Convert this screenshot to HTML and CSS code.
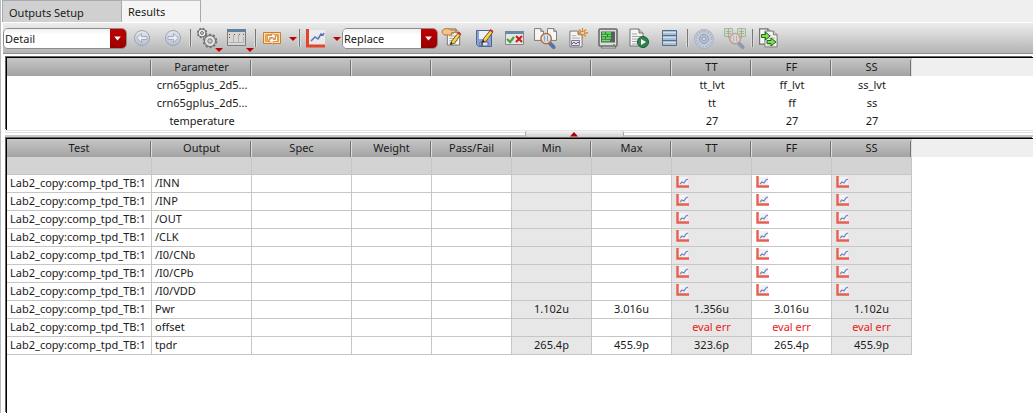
FILE: index.html
```html
<!DOCTYPE html>
<html lang="en">
<head>
<meta charset="utf-8">
<title>Results</title>
<link rel="stylesheet" href="styles.css">
</head>
<body>
<svg class="defs" aria-hidden="true">
  <defs>
    <symbol id="chart" viewBox="0 0 20 19">
      <path d="M3 1h16v15H3z" fill="#f1f3f7" opacity=".75"/>
      <path d="M1.500 0v17H19" fill="none" stroke="#e2452b" stroke-width="3"/>
      <path d="M5 12l4-4 3 2 3-5 2 1 1-2" fill="none" stroke="#5874b4" stroke-width="1.500"/>
    </symbol>
    <symbol id="wave" viewBox="0 0 14 13">
      <path d="M2 1h10v9H2z" fill="#f1f3f7"/>
      <path d="M1.500 0v10.500H13" fill="none" stroke="#e8604c" stroke-width="2.400"/>
      <path d="M4 8l2-2 2 1 2-3 2-1" fill="none" stroke="#7288bf" stroke-width="1.300"/>
    </symbol>
    <symbol id="page" viewBox="0 0 15 19">
      <path d="M1 1h9l4 4v13H1z" fill="#f6f6f4" stroke="#71736f"/>
      <path d="M10 1v4h4" fill="#ccc" stroke="#71736f"/>
      <path d="M3 6h5M3 8.500h9M3 11h9M3 13.500h9M3 16h7" stroke="#a5a7a3"/>
    </symbol>
    <symbol id="sheet" viewBox="0 0 11 14">
      <path d="M.5.5h7l3 3v10H.5z" fill="#f6f6f4" stroke="#71736f"/>
      <path d="M7.500.5v3h3" fill="#ccc" stroke="#71736f"/>
    </symbol>
    <symbol id="pencil" viewBox="0 0 15 18">
      <path d="M2 16l1-4 8-10 3 2-8 11z" fill="#f7d24a" stroke="#5f4b18"/>
      <path d="M9.500 2.500L11 1l3 2-1.500 2z" fill="#d42b2b"/>
      <path d="M1 17l1-4 2 2z" fill="#222"/>
    </symbol>
    <symbol id="lens" viewBox="0 0 18 19">
      <path d="M11 12l4 4" stroke="#5873a4" stroke-width="4" stroke-linecap="round"/>
      <circle cx="7" cy="7" r="5.500" fill="#dce6f2" fill-opacity=".85" stroke="#b96f3c" stroke-width="1.600"/>
      <path d="M5.500 4v6M8.500 4v6" stroke="#8197b5"/>
    </symbol>
    <linearGradient id="orb" x2="0" y2="1"><stop stop-color="#e3e8f0"/><stop offset="1" stop-color="#b5bfd0"/></linearGradient>
  </defs>
</svg>

<main class="window">
  <nav class="tabs" role="tablist">
    <button class="tab" role="tab" aria-selected="false">Outputs Setup</button>
    <button class="tab active" role="tab" aria-selected="true">Results</button>
  </nav>

  <div class="toolbar" role="toolbar" aria-label="Results">
    <div class="combo combo-view">
      <select aria-label="View"><option>Detail</option></select>
      <svg viewBox="0 0 16 20"><path d="M4 8h7l-3.500 4z" fill="#fff"/></svg>
    </div>
    <button class="tool" aria-label="Back"><svg viewBox="0 0 31 28"><circle cx="15" cy="14" r="7.500" fill="url(#orb)" stroke="#9ba5b8"/><path d="M9.500 14l5-4.500v3H20v3h-5.500v3z" fill="#e9edf2" stroke="#a3adbd"/></svg></button>
    <button class="tool" aria-label="Forward"><svg viewBox="0 0 31 28"><circle cx="15" cy="14" r="7.500" fill="url(#orb)" stroke="#9ba5b8"/><path d="M20.500 14l-5-4.500v3H10v3h5.500v3z" fill="#e9edf2" stroke="#a3adbd"/></svg></button>
    <span class="sep"></span>
    <button class="tool" aria-label="Options"><svg viewBox="0 0 31 28">
      <circle cx="10" cy="9" r="4" fill="#eee" stroke="#666"/><circle cx="10" cy="9" r="4.500" fill="none" stroke="#777" stroke-width="1.500" stroke-dasharray="2 1.530"/><circle cx="10" cy="9" r="1.500" fill="#ccc" stroke="#777"/>
      <circle cx="18" cy="17" r="5.500" fill="#e2e2e0" stroke="#666"/><circle cx="18" cy="17" r="6.300" fill="none" stroke="#777" stroke-width="2" stroke-dasharray="2.400 1.558"/><circle cx="18" cy="17" r="2.200" fill="#ccc" stroke="#777"/>
      <path d="M23 24h8l-4 4z" fill="#c00000"/></svg></button>
    <button class="tool" aria-label="Columns"><svg viewBox="0 0 31 28">
      <path d="M4.500 5.500h18v16h-18z" fill="#d7d7d5" stroke="#7b7d7b"/><path d="M4 5h19v3H4z" fill="#5f819e"/>
      <path d="M10.500 11v8M15.500 11v8M20.500 13v6M6 18.500h15" stroke="#b0b2b0"/><path d="M6 10.500h1M6 13.500h1M11 10.500h1M16 10.500h1M20 10.500h1" stroke="#d22"/>
      <path d="M23 24h8l-4 4z" fill="#c00000"/></svg></button>
    <span class="sep"></span>
    <button class="tool" aria-label="Plot outputs"><svg viewBox="0 0 31 28">
      <path d="M6.500 8.500h17v11h-17z" fill="#fbe3b5" stroke="#cf7a2c"/><path d="M8.500 10.500h13v7h-13z" fill="#f3b45e" stroke="#e79a45"/>
      <path d="M10.500 16v-4.500H15V8.500l4 4-4 3.500v-2.500h-2.500V16z" fill="#fff" stroke="#c87f38" stroke-width=".7"/><path d="M20.500 12v5.500H16v3l-4-4 4-3.500v2.500h2.500V12z" fill="#fff" stroke="#c87f38" stroke-width=".7"/></svg></button>
    <button class="drop" aria-label="Plot output choices"><svg viewBox="0 0 10 28"><path d="M1 13h8l-4 4z" fill="#c00000"/></svg></button>
    <span class="sep"></span>
    <button class="tool" aria-label="Plot"><svg viewBox="0 0 31 28"><use href="#chart" x="5" y="5" width="20" height="19"/></svg></button>
    <button class="drop" aria-label="Plot choices"><svg viewBox="0 0 10 28"><path d="M1 13h8l-4 4z" fill="#c00000"/></svg></button>
    <div class="combo combo-mode">
      <select aria-label="Plotting mode"><option>Replace</option></select>
      <svg viewBox="0 0 16 20"><path d="M4 8h7l-3.500 4z" fill="#fff"/></svg>
    </div>
    <button class="tool" aria-label="Edit"><svg viewBox="0 0 31 28">
      <use href="#page" x="8" y="4" width="15" height="18"/><path d="M4 7c2-3 6-3 9-1h5v2l-5 1 1 2H7c-2 0-3-2-3-4z" fill="#f3c48b" stroke="#b9752f"/><use href="#pencil" x="11" y="7" width="13" height="15"/></svg></button>
    <button class="tool" aria-label="Save"><svg viewBox="0 0 31 28">
      <path d="M7.500 6.500h15v16h-13l-2-2z" fill="#8da3cf" stroke="#4c649a"/><path d="M10 7h10v8H10z" fill="#edf0f4"/><path d="M11 18h8v4h-8z" fill="#e1e4ea" stroke="#53699a"/><path d="M12 18h2v4h-2z" fill="#53699a"/><use href="#pencil" x="12" y="4" width="13" height="16"/></svg></button>
    <button class="tool" aria-label="Check"><svg viewBox="0 0 31 28">
      <path d="M5.500 7.500h18v13h-18z" fill="#e4e6e4" stroke="#858a8a"/><path d="M5 7h19v3H5z" fill="#698aa6"/><path d="M7 15l3 3 4-5" fill="none" stroke="#4fa03c" stroke-width="2.200"/><path d="M16 12l6 6M22 12l-6 6" stroke="#cd1919" stroke-width="2"/></svg></button>
    <button class="tool" aria-label="Compare"><svg viewBox="0 0 31 28">
      <use href="#sheet" x="3" y="4" width="10" height="13"/><use href="#sheet" x="16" y="4" width="10" height="13"/><use href="#lens" x="8" y="8" width="18" height="18"/></svg></button>
    <button class="tool" aria-label="Report"><svg viewBox="0 0 31 28">
      <use href="#page" x="7" y="6" width="14" height="18"/><path d="M9.500 16.500h8v5h-8z" fill="#dfe5f2" stroke="#7180a0"/><path d="M10 20l2-2 2 2 2-2 1 1" fill="none" stroke="#c33"/><path d="M20.500 4v4M20.500 10v4M15 9h4M22 9h4M17 5.500l2.500 2.500M24 5.500L21.500 8M24 12.500L21.500 10" stroke="#d98b2e" stroke-width="1.300"/></svg></button>
    <button class="tool" aria-label="Log"><svg viewBox="0 0 31 28">
      <path d="M10 21h11l2 3H8z" fill="#e4e6e3" stroke="#777"/><rect x="6" y="5" width="18" height="17" rx="1" fill="#dcdedb" stroke="#656765" stroke-width="1.500"/><path d="M8 7.500h14v11H8z" fill="#59625a"/><path d="M9 9h3M13 9h5M9 11.500h5M15 11.500h3M9 14h3M13 14h5M9 16.500h8" stroke="#4dfa50" stroke-width="1.400"/><path d="M20 20.500h2" stroke="#3fce3f"/></svg></button>
    <button class="tool" aria-label="Run script"><svg viewBox="0 0 31 28">
      <use href="#page" x="5" y="4" width="15" height="19"/><circle cx="19" cy="18" r="5.500" fill="#2e844c" stroke="#155c2d"/><path d="M17 15l5 3-5 3z" fill="#fff"/></svg></button>
    <button class="tool" aria-label="Data"><svg viewBox="0 0 31 28">
      <path d="M7.500 6.500h14v15h-14z" fill="#a9bfd3" stroke="#526d8a"/><path d="M8 8.500h13M8 13.500h13M8 18.500h13" stroke="#d5e1ec"/><path d="M7 11.500h15M7 16.500h15" stroke="#526d8a"/></svg></button>
    <span class="sep"></span>
    <button class="tool" aria-label="Specification"><svg viewBox="0 0 31 28">
      <circle cx="15" cy="15" r="9.500" fill="#c4ccda" stroke="#a8b1c2"/><circle cx="15" cy="15" r="7.500" fill="none" stroke="#9fa9bd" stroke-width="1.500" stroke-dasharray="1 2"/><circle cx="15" cy="15" r="4.500" fill="#b9c2d2" stroke="#929db4"/><circle cx="15" cy="15" r="2" fill="#ced6e2" stroke="#929db4"/></svg></button>
    <button class="tool" aria-label="Inspect"><svg viewBox="0 0 31 28">
      <g opacity=".5"><path d="M4.500 4.500h8v8h-8zM17.500 4.500h8v8h-8z" fill="#b8dfc1" stroke="#56a069"/><path d="M6 7.500h5M6 9.500h5M19 7.500h5M19 9.500h5" stroke="#56a069"/><path d="M8.500 4v10h5M21.500 4v10h-5" fill="none" stroke="#d25545"/><use href="#lens" x="8" y="8" width="18" height="18"/></g></svg></button>
    <span class="sep"></span>
    <button class="tool" aria-label="Export"><svg viewBox="0 0 31 28">
      <use href="#sheet" x="5" y="4" width="13" height="17"/><use href="#page" x="10" y="6" width="14" height="18"/><path d="M7.500 10.500h4V8l4.500 4-4.500 4v-2.500h-4zM13 16.500h4V14l5 4-5 4v-2.500h-4z" fill="#7be04c" stroke="#236c18"/></svg></button>
  </div>

  <section class="pane conditions">
    <table>
      <colgroup><col class="c-test"><col class="c-wide"><col class="c-wide"><col class="c-num" span="7"><col></colgroup>
      <thead><tr><th></th><th>Parameter</th><th></th><th></th><th></th><th></th><th></th><th>TT</th><th>FF</th><th>SS</th><td class="rest"></td></tr></thead>
      <tbody>
        <tr><td></td><td>crn65gplus_2d5...</td><td></td><td></td><td></td><td></td><td></td><td>tt_lvt</td><td>ff_lvt</td><td>ss_lvt</td><td class="rest"></td></tr>
        <tr><td></td><td>crn65gplus_2d5...</td><td></td><td></td><td></td><td></td><td></td><td>tt</td><td>ff</td><td>ss</td><td class="rest"></td></tr>
        <tr><td></td><td>temperature</td><td></td><td></td><td></td><td></td><td></td><td>27</td><td>27</td><td>27</td><td class="rest"></td></tr>
      </tbody>
    </table>
  </section>

  <div class="splitter"><button class="handle" aria-label="Collapse upper pane"><svg viewBox="0 0 10 6"><path d="M1 5.500L5 1l4 4.500z" fill="#b00000"/></svg></button></div>

  <section class="pane results">
    <table>
      <colgroup><col class="c-test"><col class="c-wide"><col class="c-wide"><col class="c-num" span="7"><col></colgroup>
      <thead><tr><th>Test</th><th>Output</th><th>Spec</th><th>Weight</th><th>Pass/Fail</th><th>Min</th><th>Max</th><th>TT</th><th>FF</th><th>SS</th><td class="rest"></td></tr></thead>
      <tbody>
        <tr class="filter"><td></td><td></td><td></td><td></td><td></td><td></td><td></td><td></td><td></td><td></td><td class="rest"></td></tr>
        <tr><td>Lab2_copy:comp_tpd_TB:1</td><td>/INN</td><td></td><td></td><td></td><td></td><td></td><td><svg class="wave"><use href="#wave"/></svg></td><td><svg class="wave"><use href="#wave"/></svg></td><td><svg class="wave"><use href="#wave"/></svg></td><td class="rest"></td></tr>
        <tr><td>Lab2_copy:comp_tpd_TB:1</td><td>/INP</td><td></td><td></td><td></td><td></td><td></td><td><svg class="wave"><use href="#wave"/></svg></td><td><svg class="wave"><use href="#wave"/></svg></td><td><svg class="wave"><use href="#wave"/></svg></td><td class="rest"></td></tr>
        <tr><td>Lab2_copy:comp_tpd_TB:1</td><td>/OUT</td><td></td><td></td><td></td><td></td><td></td><td><svg class="wave"><use href="#wave"/></svg></td><td><svg class="wave"><use href="#wave"/></svg></td><td><svg class="wave"><use href="#wave"/></svg></td><td class="rest"></td></tr>
        <tr><td>Lab2_copy:comp_tpd_TB:1</td><td>/CLK</td><td></td><td></td><td></td><td></td><td></td><td><svg class="wave"><use href="#wave"/></svg></td><td><svg class="wave"><use href="#wave"/></svg></td><td><svg class="wave"><use href="#wave"/></svg></td><td class="rest"></td></tr>
        <tr><td>Lab2_copy:comp_tpd_TB:1</td><td>/I0/CNb</td><td></td><td></td><td></td><td></td><td></td><td><svg class="wave"><use href="#wave"/></svg></td><td><svg class="wave"><use href="#wave"/></svg></td><td><svg class="wave"><use href="#wave"/></svg></td><td class="rest"></td></tr>
        <tr><td>Lab2_copy:comp_tpd_TB:1</td><td>/I0/CPb</td><td></td><td></td><td></td><td></td><td></td><td><svg class="wave"><use href="#wave"/></svg></td><td><svg class="wave"><use href="#wave"/></svg></td><td><svg class="wave"><use href="#wave"/></svg></td><td class="rest"></td></tr>
        <tr><td>Lab2_copy:comp_tpd_TB:1</td><td>/I0/VDD</td><td></td><td></td><td></td><td></td><td></td><td><svg class="wave"><use href="#wave"/></svg></td><td><svg class="wave"><use href="#wave"/></svg></td><td><svg class="wave"><use href="#wave"/></svg></td><td class="rest"></td></tr>
        <tr><td>Lab2_copy:comp_tpd_TB:1</td><td>Pwr</td><td></td><td></td><td></td><td class="num">1.102u</td><td class="num">3.016u</td><td class="num">1.356u</td><td class="num">3.016u</td><td class="num">1.102u</td><td class="rest"></td></tr>
        <tr><td>Lab2_copy:comp_tpd_TB:1</td><td>offset</td><td></td><td></td><td></td><td></td><td></td><td class="num err">eval err</td><td class="num err">eval err</td><td class="num err">eval err</td><td class="rest"></td></tr>
        <tr><td>Lab2_copy:comp_tpd_TB:1</td><td>tpdr</td><td></td><td></td><td></td><td class="num">265.4p</td><td class="num">455.9p</td><td class="num">323.6p</td><td class="num">265.4p</td><td class="num">455.9p</td><td class="rest"></td></tr>
      </tbody>
    </table>
  </section>
</main>
</body>
</html>
```

FILE: styles.css
```css
* { box-sizing: border-box; }

body {
  margin: 0;
  background: #fff;
  color: #1a1a1a;
  font: 11px/16px "Noto Sans", "Open Sans", sans-serif;
}

button, select { font: inherit; color: inherit; }
button { border: 0; padding: 0; background: none; }
svg { display: block; }
.defs { position: absolute; width: 0; height: 0; }

.window {
  display: flex;
  flex-direction: column;
  min-height: 100vh;
  padding-left: 1px;
  border-left: 1px solid #b9b9c1;
}

/* Tabs */
.tabs {
  display: flex;
  height: 22px;
  background: #efefef;
}
.tab {
  padding: 2px 6px 0;
  border: solid #a9a9ad;
  border-width: 1px 0 0 1px;
  background: #d0d0d0;
  width: 119px;
  text-align: left;
}
.tab.active {
  width: 80px;
  padding-top: 0;
  border-color: #c2c2c2 #a9a9ad;
  border-width: 1px 1px 0;
  background: #f5f5f5;
}

/* Toolbar */
.toolbar {
  display: flex;
  align-items: center;
  height: 32px;
  margin-left: 1px;
  border-top: 1px solid #fff;
  border-bottom: 1px solid #8e8e8e;
  background: linear-gradient(#ececec, #d6d6d6 40%, #b4b4b4);
}
.combo {
  position: relative;
  height: 21px;
  border: 1px solid #8c8c8c;
  border-radius: 5px;
  overflow: hidden;
  background: #fff;
}
.combo-view { width: 124px; }
.combo-mode { width: 96px; }
.combo select {
  appearance: none;
  width: 100%;
  height: 100%;
  padding: 1px 18px 0 1px;
  border: 0;
  background: linear-gradient(#f1f1f1, #fff 30%);
}
.combo svg {
  position: absolute;
  top: 0;
  right: 0;
  width: 16px;
  height: 100%;
  background: linear-gradient(#c00000, #980000);
  pointer-events: none;
}
.tool svg { width: 31px; height: 28px; }
.drop svg { width: 10px; height: 28px; }
.sep {
  width: 3px;
  height: 18px;
  border: solid #dcdcdc;
  border-width: 0 1px;
  background: #777;
}

/* Tables */
.pane {
  margin-left: 4px;
  border: solid #000;
  border-width: 1px 0 0 1px;
  box-shadow: -1px -1px 0 #666;
}
.conditions { margin-top: 3px; }
.results { flex: 1; margin-top: 1px; }

table {
  width: 100%;
  table-layout: fixed;
  border-collapse: separate;
  border-spacing: 0;
}
.c-test { width: 145px; }
.c-wide { width: 100px; }
.c-num { width: 80px; }

th, td {
  height: 18px;
  padding: 0;
  line-height: 18px;
  vertical-align: top;
  white-space: nowrap;
}
thead th {
  padding-right: 1px;
  font-weight: normal;
  background:
    linear-gradient(#ddd, #ddd) right 2px / 1px 16px no-repeat,
    linear-gradient(#727272, #727272) right 1px top 2px / 1px 16px no-repeat,
    linear-gradient(#c6c6c6, #a3a3a3);
}
thead .rest { background: #efefef; }

.conditions tbody td { text-align: center; }

.results tbody td {
  padding-left: 3px;
  border: solid #c6c6c6;
  border-width: 0 1px 1px 0;
  line-height: 16px;
}
.results tbody td:nth-child(6),
.results tbody td:nth-child(8),
.results tbody td:nth-child(10) { background: #e7e7e7; }
.results tbody .filter td { background: #d3d3d3; }
.results tbody .rest,
.results tbody .filter .rest { border: 0; background: #fff; }
.results tbody .num { padding: 0; text-align: center; }
.results tbody .err { color: #f01818; }
.wave { width: 14px; height: 13px; margin: 1px 0 0 1px; }

/* Splitter */
.splitter {
  display: flex;
  justify-content: center;
  height: 7px;
  margin-left: 3px;
  padding-left: 110px;
  border-top: 1px solid #e4e4e4;
  background: linear-gradient(#fff 1px, #e0e0e0 1px 2px, #fff 2px 4px, #c8c8c8 4px);
}
.handle {
  width: 99px;
  height: 6px;
  border: solid #aaa;
  border-width: 0 1px;
  border-radius: 2px;
  background: linear-gradient(#f3f3f3, #cfcfcf);
}
.handle svg { width: 10px; height: 6px; margin: 0 auto; }
```
